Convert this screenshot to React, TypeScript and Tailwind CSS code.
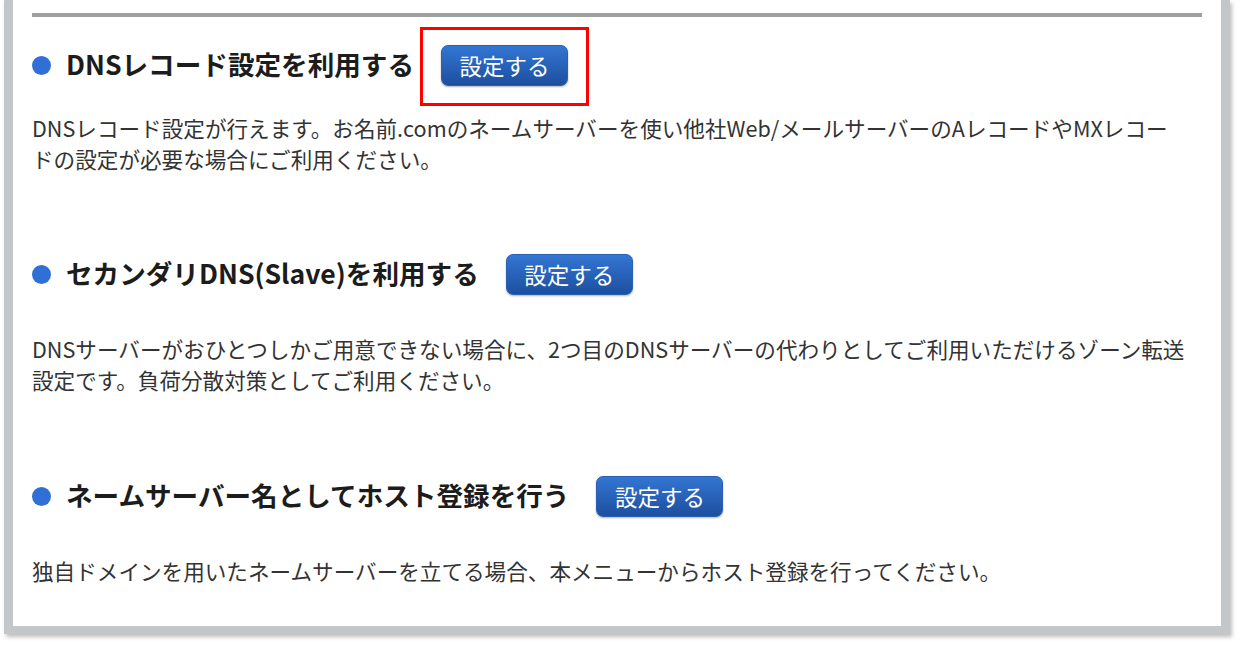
const SetButton = () => (
  <button
    type="button"
    className="h-[41px] w-[127px] shrink-0 rounded-[7px] border border-[#2a5fb3] bg-gradient-to-b from-[#3376d3] to-[#1d4f9f] text-[22.5px] leading-none text-white shadow-[0_1px_2px_rgba(0,0,0,0.3)]"
  >
    設定する
  </button>
);

type SectionProps = {
  title: string;
  text: string;
  highlight?: boolean;
  className?: string;
  textClass?: string;
};

const Section = ({ title, text, highlight, className = "", textClass = "" }: SectionProps) => (
  <section className={className}>
    <div className="flex h-[41px] items-center">
      <span className="mr-[15px] size-[19px] shrink-0 rounded-full bg-[#2f6fd6]" />
      <h2 className="-mt-[3px] text-[26.6px] font-bold leading-none text-[#1c1c1c]">{title}</h2>
      <div className="relative ml-[27px]">
        {highlight && (
          <div className="absolute -bottom-[20px] -left-[21px] -right-[21px] -top-[18px] border-[3px] border-[#ff0000]" />
        )}
        <SetButton />
      </div>
    </div>
    <p className={`pr-[14px] text-[21.6px] leading-[31px] text-[#333] ${textClass}`}>{text}</p>
  </section>
);

export default function App() {
  return (
    <div
      className="h-[655px] w-[1242px] bg-white"
      style={{ fontFamily: '"Noto Sans CJK JP", "Noto Sans", sans-serif' }}
    >
      <div className="ml-[4px] w-[1226px] border-x-[9px] border-b-[8px] border-[#c3c7ca] bg-white px-[19px] pb-[40px] pt-[13px] shadow-[2px_3px_4px_rgba(0,0,0,0.25)]">
        <div className="h-[4px] bg-[#9da1a4]" />
        <Section
          className="mt-[28px]"
          textClass="mt-[26px]"
          highlight
          title="DNSレコード設定を利用する"
          text="DNSレコード設定が行えます。お名前.comのネームサーバーを使い他社Web/メールサーバーのAレコードやMXレコードの設定が必要な場合にご利用ください。"
        />
        <Section
          className="mt-[80px]"
          textClass="mt-[38px]"
          title="セカンダリDNS(Slave)を利用する"
          text="DNSサーバーがおひとつしかご用意できない場合に、2つ目のDNSサーバーの代わりとしてご利用いただけるゾーン転送設定です。負荷分散対策としてご利用ください。"
        />
        <Section
          className="mt-[81px]"
          textClass="mt-[38px]"
          title="ネームサーバー名としてホスト登録を行う"
          text="独自ドメインを用いたネームサーバーを立てる場合、本メニューからホスト登録を行ってください。"
        />
      </div>
    </div>
  );
}
